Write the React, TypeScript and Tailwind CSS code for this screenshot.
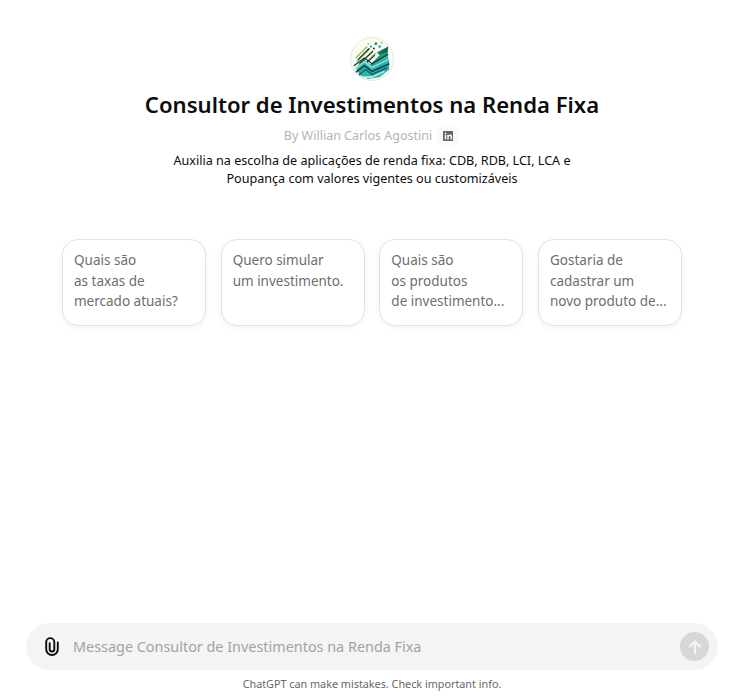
const font = { fontFamily: '"Noto Sans", sans-serif' };

const cards = [
  ["Quais são", "as taxas de", "mercado atuais?"],
  ["Quero simular", "um investimento."],
  ["Quais são", "os produtos", "de investimento..."],
  ["Gostaria de", "cadastrar um", "novo produto de..."],
];

function Logo() {
  return (
    <div className="h-11 w-11 overflow-hidden rounded-full border border-[#e8e8e0] bg-[#fbfaf3]">
      <svg viewBox="0 0 44 44" className="h-full w-full" fill="none">
        <path d="M5 21 L17 9 M6 25 L20 11 M8 28 L23 13 M10 31 L26 16" stroke="#8cc152" strokeWidth="1.4" />
        <path d="M7 23 L19 11 M9 27 L23 14 M12 30 L25 18" stroke="#1f2f38" strokeWidth="1.2" />
        <path d="M19 29 L30 18 L27 15 L39 9 L38 23 L35 20 L26 30 Z" fill="#1d9c7c" />
        <path d="M28 17 L33 13 L39 9 L38 15 Z" fill="#175f4f" />
        <path d="M5 31 L14 23 L22 29 L38 18 L40 24 L40 33 L30 41 L18 43 L9 39 Z" fill="#2fb3a8" />
        <path d="M3 29 L14 21 L22 27 L39 17" stroke="#0a3f4a" strokeWidth="1.400" />
        <path d="M4 33 L14 25 L22 31 L40 22" stroke="#a5e0d8" strokeWidth="1.300" />
        <path d="M5 36 L14 29 L22 35 L40 27" stroke="#0a3f4a" strokeWidth="1.600" />
        <path d="M8 39 L15 33 L22 38 L38 31" stroke="#0c5e62" strokeWidth="1.300" />
        <path d="M11 41 L22 41 L35 35" stroke="#c9e9e3" strokeWidth="1.600" />
        <circle cx="26" cy="6" r="1.500" fill="#1a8f8a" />
        <circle cx="30" cy="9" r="1.500" fill="#35b0a8" />
        <circle cx="21" cy="9" r="1.100" fill="#1a8f8a" />
        <circle cx="32" cy="5" r="1" fill="#8cc152" />
        <circle cx="24" cy="11" r="1" fill="#1f2f38" />
        <circle cx="18" cy="6" r="0.800" fill="#35b0a8" />
      </svg>
    </div>
  );
}

export default function App() {
  return (
    <div style={font} className="flex h-[699px] w-[744px] flex-col overflow-hidden bg-white text-[#0d0d0d]">
      <main className="flex flex-1 flex-col items-center pt-[37px]">
        <Logo />
        <h1 className="mt-[8px] text-[22.1px] leading-[30px] font-semibold">
          Consultor de Investimentos na Renda Fixa
        </h1>
        <div className="mt-[5px] flex h-6 items-center text-[12.5px] text-[#b4b4b4]">
          <span>By Willian Carlos Agostini</span>
          <span className="ml-[4px] flex h-6 w-6 items-center justify-center rounded-full bg-[#f9f9f9]">
            <svg viewBox="0 0 24 24" className="h-3 w-3" fill="#666666">
              <path d="M3 2h18a1 1 0 0 1 1 1v18a1 1 0 0 1-1 1H3a1 1 0 0 1-1-1V3a1 1 0 0 1 1-1Zm2.500 7.500V19h3V9.500h-3ZM7 5a1.700 1.700 0 1 0 0 3.400A1.700 1.700 0 0 0 7 5Zm3.500 4.500V19h3v-5c0-1.400.6-2.200 1.800-2.200s1.700.8 1.700 2.200v5h3v-5.800c0-2.700-1.400-4-3.500-4-1.500 0-2.500.7-3 1.600V9.500h-3Z" />
            </svg>
          </span>
        </div>
        <p className="mt-[4px] w-[420px] text-center text-[12.6px] leading-[18px]">
          Auxilia na escolha de aplicações de renda fixa: CDB, RDB, LCI, LCA e Poupança com valores vigentes ou customizáveis
        </p>
        <div className="mt-[51px] grid w-[620px] grid-cols-4 gap-[14.67px]">
          {cards.map((lines, i) => (
            <div
              key={i}
              className="h-[87px] rounded-2xl border border-[#e3e3e3] bg-white px-[11px] py-[10px] text-[13.5px] leading-[20.5px] text-[#6e6e6e] shadow-[0_2px_6px_rgba(0,0,0,0.05)]"
            >
              {lines.map((l) => (
                <div key={l} className="whitespace-nowrap">{l}</div>
              ))}
            </div>
          ))}
        </div>
      </main>
      <div className="px-[26px]">
        <div className="flex h-[47px] items-center rounded-3xl bg-[#f4f4f4] pr-[9px] pl-[19px]">
          <svg viewBox="0 0 14 19" className="h-[19px] w-[14px] shrink-0" fill="none" stroke="#0d0d0d" strokeWidth="1.900" strokeLinecap="round">
            <path d="M12.800 5.500V12.200a5.800 5.800 0 0 1-11.600 0V5.200a4 4 0 0 1 8.100 0V12.200a2.300 2.300 0 0 1-4.600 0V6.200" />
          </svg>
          <span className="ml-[14px] flex-1 text-[14.4px] text-[#a3a3a3]">
            Message Consultor de Investimentos na Renda Fixa
          </span>
          <div className="flex h-[29px] w-[29px] items-center justify-center rounded-full bg-[#d7d7d7]">
            <svg viewBox="0 0 24 24" className="h-[22px] w-[22px]" fill="none" stroke="#f4f4f4" strokeWidth="2.500" strokeLinecap="round" strokeLinejoin="round">
              <path d="M12 19V6M6.500 11.500 12 6l5.500 5.500" />
            </svg>
          </div>
        </div>
      </div>
      <div className="flex h-[29px] items-center justify-center text-[10.8px] text-[#676767]">
        ChatGPT can make mistakes. Check important info.
      </div>
    </div>
  );
}
